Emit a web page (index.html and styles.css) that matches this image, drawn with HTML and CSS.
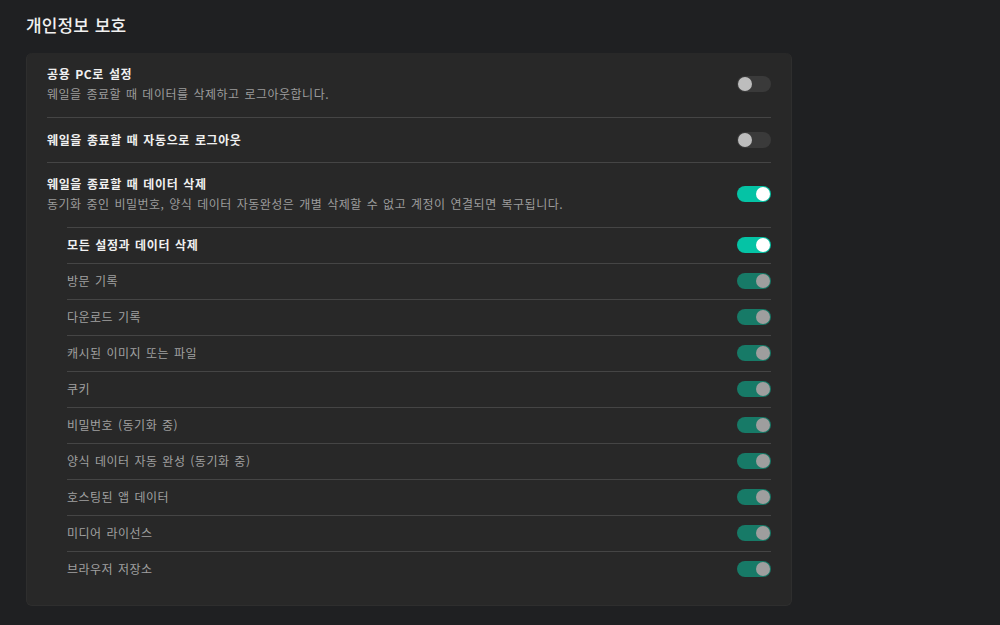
FILE: index.html
```html
<!DOCTYPE html>
<html lang="ko">
<head>
<meta charset="utf-8">
<title>개인정보 보호</title>
<link rel="stylesheet" href="styles.css">
</head>
<body>
<main class="page">
  <h1 class="heading">개인정보 보호</h1>
  <section class="card">
    <div class="row row-multi">
      <div class="row-text">
        <div class="row-title">공용 PC로 설정</div>
        <div class="row-desc">웨일을 종료할 때 데이터를 삭제하고 로그아웃합니다.</div>
      </div>
      <span class="toggle"></span>
    </div>
    <div class="row row-single">
      <div class="row-text">
        <div class="row-title">웨일을 종료할 때 자동으로 로그아웃</div>
      </div>
      <span class="toggle"></span>
    </div>
    <div class="row row-multi row-last">
      <div class="row-text">
        <div class="row-title">웨일을 종료할 때 데이터 삭제</div>
        <div class="row-desc">동기화 중인 비밀번호, 양식 데이터 자동완성은 개별 삭제할 수 없고 계정이 연결되면 복구됩니다.</div>
      </div>
      <span class="toggle on"></span>
    </div>
    <div class="sub-list">
      <div class="sub-row sub-main"><span class="sub-label">모든 설정과 데이터 삭제</span><span class="toggle on"></span></div>
      <div class="sub-row"><span class="sub-label">방문 기록</span><span class="toggle on disabled"></span></div>
      <div class="sub-row"><span class="sub-label">다운로드 기록</span><span class="toggle on disabled"></span></div>
      <div class="sub-row"><span class="sub-label">캐시된 이미지 또는 파일</span><span class="toggle on disabled"></span></div>
      <div class="sub-row"><span class="sub-label">쿠키</span><span class="toggle on disabled"></span></div>
      <div class="sub-row"><span class="sub-label">비밀번호 (동기화 중)</span><span class="toggle on disabled"></span></div>
      <div class="sub-row"><span class="sub-label">양식 데이터 자동 완성 (동기화 중)</span><span class="toggle on disabled"></span></div>
      <div class="sub-row"><span class="sub-label">호스팅된 앱 데이터</span><span class="toggle on disabled"></span></div>
      <div class="sub-row"><span class="sub-label">미디어 라이선스</span><span class="toggle on disabled"></span></div>
      <div class="sub-row"><span class="sub-label">브라우저 저장소</span><span class="toggle on disabled"></span></div>
    </div>
  </section>
</main>
</body>
</html>
```

FILE: styles.css
```css
html, body {
  margin: 0;
  padding: 0;
  background: #1f2022;
}

body {
  font-family: "Noto Sans CJK KR", "Noto Sans", sans-serif;
  color: #f2f2f2;
  letter-spacing: 0.5px;
  word-spacing: 1px;
}

.page {
  padding: 14px 26px 0 26px;
}

.heading {
  margin: 0 0 17px 0;
  font-size: 17px;
  line-height: 22px;
  font-weight: 500;
  letter-spacing: 0.1px;
  color: #f0f0f0;
}

.card {
  width: 724px;
  padding: 0 20px 18px 20px;
  background: #282828;
  border: 1px solid #2e2e2e;
  border-top: none;
  border-radius: 6px;
}

.row {
  display: flex;
  align-items: center;
  justify-content: space-between;
  border-bottom: 1px solid #454545;
}

.row-multi {
  padding: 11px 0 13px 0;
}

.row-single {
  padding: 12px 0;
}

.row-last {
  border-bottom: none;
}

.row-title {
  font-size: 12px;
  line-height: 20px;
  font-weight: 700;
  letter-spacing: 0.6px;
  color: #f0f0f0;
}

.row-desc {
  font-size: 12px;
  line-height: 20px;
  color: #9c9c9c;
}

.sub-list {
  margin-left: 20px;
  border-top: 1px solid #454545;
}

.sub-row {
  display: flex;
  align-items: center;
  justify-content: space-between;
  padding: 7px 0 8px 0;
  border-bottom: 1px solid #454545;
}

.sub-row:last-child {
  border-bottom: none;
}

.sub-label {
  font-size: 12px;
  line-height: 20px;
  color: #a0a0a0;
}

.sub-main .sub-label {
  color: #f0f0f0;
  font-weight: 700;
  letter-spacing: 0.6px;
}

.toggle {
  position: relative;
  flex: none;
  width: 34px;
  height: 16px;
  border-radius: 8px;
  background: #3a3a3a;
}

.toggle::after {
  content: "";
  position: absolute;
  top: 1px;
  left: 1px;
  width: 14px;
  height: 14px;
  border-radius: 50%;
  background: #bdbdbd;
}

.toggle.on {
  background: #05c3a5;
}

.toggle.on::after {
  left: auto;
  right: 1px;
  background: #ffffff;
}

.toggle.on.disabled {
  background: #177a67;
}

.toggle.on.disabled::after {
  background: #9e9e9e;
}
```
